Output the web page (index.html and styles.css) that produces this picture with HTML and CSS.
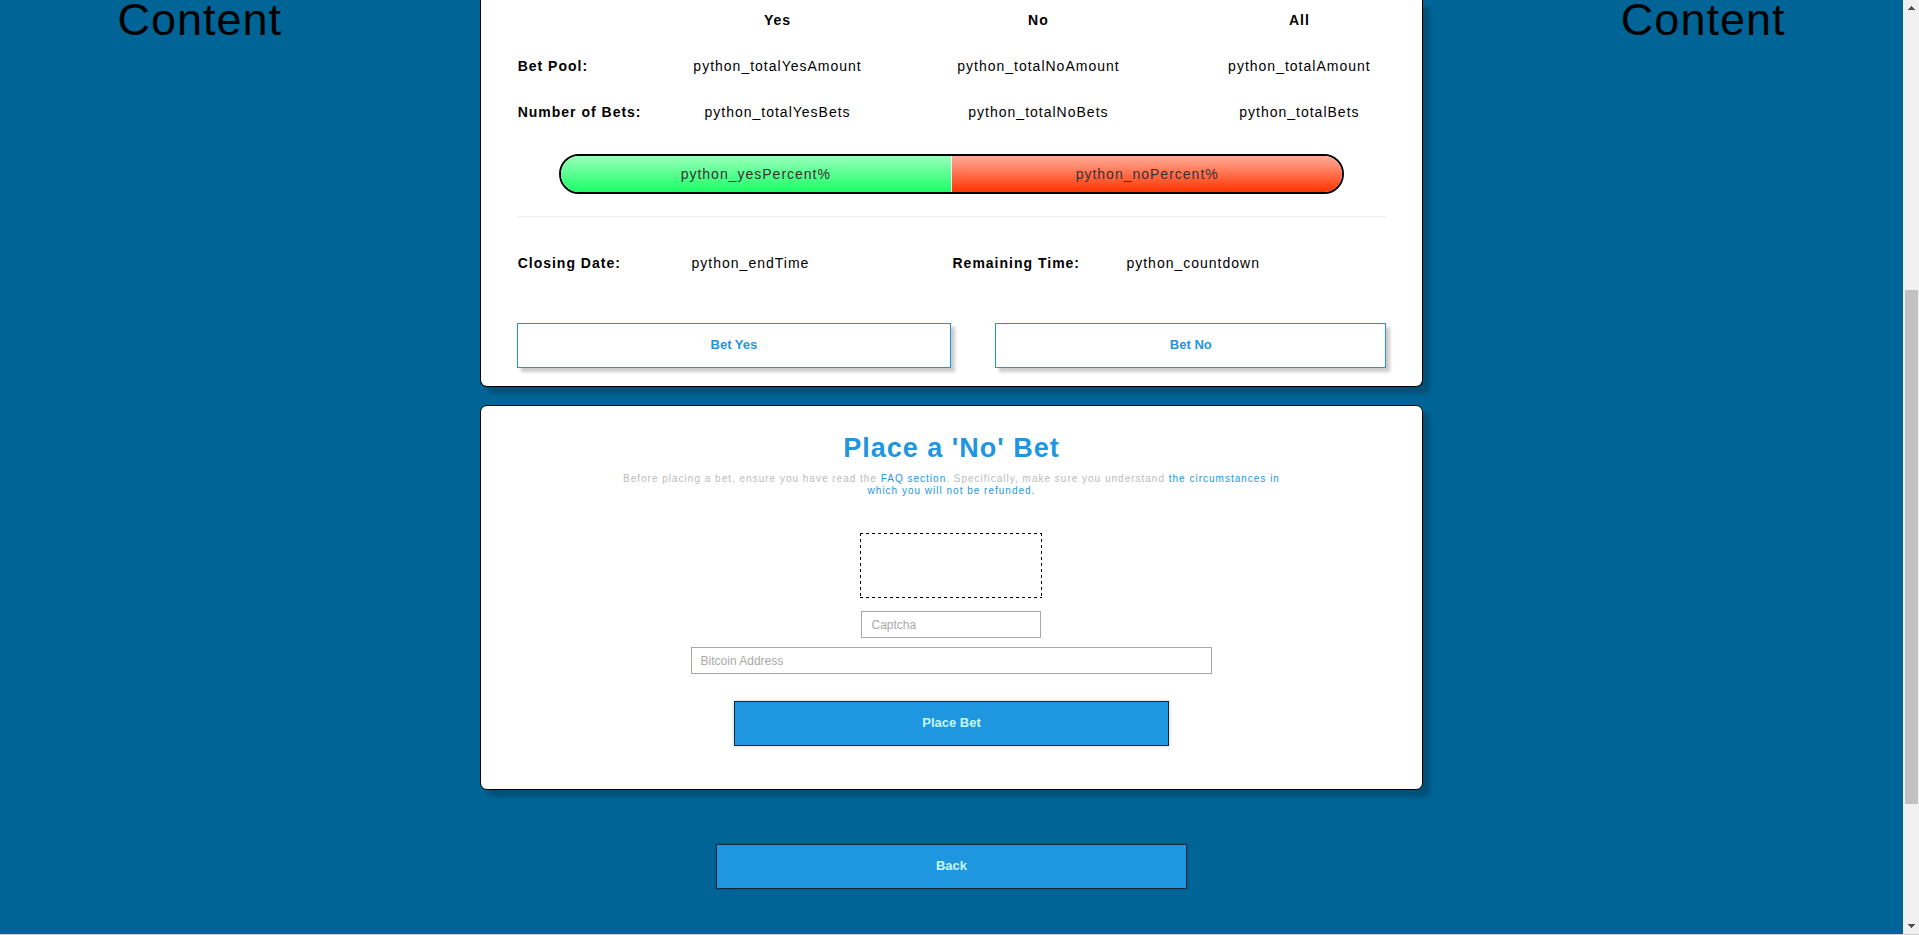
FILE: index.html
```html
<!DOCTYPE html>
<html lang="en">
<head>
<meta charset="utf-8">
<title>Place a Bet</title>
<link rel="stylesheet" href="styles.css">
</head>
<body>
<div class="window">
  <div class="page">
    <aside class="side">Content</aside>
    <main class="main">
      <section class="card card-stats">
        <table class="stats">
          <colgroup><col class="col-label"><col class="col-first"><col class="col-rest"><col class="col-rest"></colgroup>
          <thead>
            <tr><td></td><th scope="col">Yes</th><th scope="col">No</th><th scope="col">All</th></tr>
          </thead>
          <tbody>
            <tr><th scope="row">Bet Pool:</th><td>python_totalYesAmount</td><td>python_totalNoAmount</td><td>python_totalAmount</td></tr>
            <tr><th scope="row">Number of Bets:</th><td>python_totalYesBets</td><td>python_totalNoBets</td><td>python_totalBets</td></tr>
          </tbody>
        </table>
        <div class="ratio">
          <div class="ratio-part ratio-yes">python_yesPercent%</div>
          <div class="ratio-part ratio-no">python_noPercent%</div>
        </div>
        <hr class="rule">
        <dl class="times">
          <dt>Closing Date:</dt><dd>python_endTime</dd>
          <dt>Remaining Time:</dt><dd>python_countdown</dd>
        </dl>
        <div class="choices">
          <button type="button" class="button button-outline">Bet Yes</button>
          <button type="button" class="button button-outline">Bet No</button>
        </div>
      </section>
      <section class="card card-form">
        <h2 class="title">Place a 'No' Bet</h2>
        <p class="note">Before placing a bet, ensure you have read the <a href="#faq">FAQ section</a>. Specifically, make sure you understand <a href="#refunds">the circumstances in which you will not be refunded.</a></p>
        <form class="form">
          <div class="captcha-image"></div>
          <input class="field field-captcha" type="text" placeholder="Captcha" aria-label="Captcha">
          <input class="field field-address" type="text" placeholder="Bitcoin Address" aria-label="Bitcoin Address">
          <button type="button" class="button button-solid button-place">Place Bet</button>
        </form>
      </section>
      <button type="button" class="button button-solid button-back">Back</button>
    </main>
    <aside class="side">Content</aside>
  </div>
  <div class="scrollbar" aria-hidden="true">
    <svg class="arrow" width="7" height="4" viewBox="0 0 7 4"><path d="M3 0h1v1h1v1h1v1h1v1H0V3h1V2h1V1h1z" fill="#505050"/></svg>
    <div class="track"><div class="thumb"></div></div>
    <svg class="arrow" width="7" height="4" viewBox="0 0 7 4"><path d="M0 0h7v1H6v1H5v1H4v1H3V3H2V2H1V1H0z" fill="#505050"/></svg>
  </div>
</div>
</body>
</html>
```

FILE: styles.css
```css
* {
  box-sizing: border-box;
}

body {
  margin: 0;
  background: #006596;
  color: #000;
  font: 14px/16px "Liberation Sans", Arial, sans-serif;
  letter-spacing: 1px;
}

.window {
  display: flex;
  min-height: 100vh;
  border-bottom: 1px solid #ccc;
}

.page {
  flex: 1;
  display: grid;
  grid-template-columns: 21fr 58fr 21fr;
}

.side {
  font-size: 45px;
  line-height: 40px;
  text-align: center;
}

.main {
  display: flex;
  flex-direction: column;
  align-items: center;
  padding: 0 80px 45px;
}

.card {
  width: 100%;
  padding: 0 36px;
  border: 1px solid #000;
  border-radius: 7px;
  background: #fff;
  box-shadow: 7px 7px 4px rgba(0, 0, 0, 0.2);
}

.card-stats {
  margin-bottom: 18px;
  padding-bottom: 18px;
  border-top: 0;
  border-top-left-radius: 0;
  border-top-right-radius: 0;
}

.stats {
  width: 100%;
  table-layout: fixed;
  border-collapse: collapse;
  text-align: center;
}

.col-label,
.col-first {
  width: 20%;
}

.col-rest {
  width: 30%;
}

.stats th,
.stats td {
  padding: 15px 0;
}

.stats thead th {
  padding-top: 12px;
}

.stats th:nth-child(n + 3),
.stats td:nth-child(n + 3) {
  padding-left: 10%;
}

.stats tbody th {
  padding-left: 1px;
  text-align: left;
}

.ratio {
  display: flex;
  gap: 1px;
  margin: 19px 42px 22px;
  border: 2px solid #000;
  border-radius: 20px;
  overflow: hidden;
  line-height: 36px;
  text-align: center;
  color: #333;
}

.ratio-part {
  flex: 1;
}

.ratio-yes {
  background: linear-gradient(#99ffbb, #1aff66);
}

.ratio-no {
  background: linear-gradient(#ffad99, #ff3300);
}

.rule {
  height: 1px;
  margin: 0;
  border: 0;
  background: #eee;
}

.times {
  display: grid;
  grid-template-columns: 2fr 3fr 2fr 3fr;
  margin: 38px 0 52px;
}

.times dt,
.times dd {
  margin: 0;
  padding-left: 1px;
}

.times dt {
  font-weight: bold;
}

.choices {
  display: grid;
  grid-template-columns: 10fr 9fr;
  gap: 44px;
}

.button {
  height: 45px;
  padding: 0 12px 2px;
  border: 1px solid #1e96e0;
  font: bold 13px/16px "Liberation Sans", Arial, sans-serif;
}

.button-outline {
  background: #fff;
  color: #1e96e0;
  box-shadow: 4px 4px 3px rgba(0, 0, 0, 0.2);
}

.button-solid {
  width: 50%;
  border-color: #12293d;
  background: #1e96e0;
  color: #c5faff;
  box-shadow: 0 0 4px rgba(0, 0, 0, 0.2);
}

.card-form {
  padding-bottom: 43px;
  text-align: center;
}

.title {
  margin: 26px 0 9px;
  color: #1e96e0;
  font-size: 27px;
  line-height: 32px;
}

.note {
  max-width: 78%;
  margin: 0 auto 36px;
  color: #bbb;
  font-size: 10px;
  line-height: 12px;
}

.note a {
  color: #1e96e0;
  text-decoration: none;
}

.form {
  display: flex;
  flex-direction: column;
  align-items: center;
}

.captcha-image {
  --dash: #000 0 3px, transparent 3px 6px;
  width: 182px;
  height: 65px;
  margin-bottom: 13px;
  background:
    repeating-linear-gradient(90deg, var(--dash)) top / 100% 1px no-repeat,
    repeating-linear-gradient(90deg, var(--dash)) bottom / 100% 1px no-repeat,
    repeating-linear-gradient(var(--dash)) left / 1px 100% no-repeat,
    repeating-linear-gradient(var(--dash)) right / 1px 100% no-repeat;
}

.field {
  height: 27px;
  margin: 0 0 9px;
  padding: 0 9px;
  border: 1px solid #a9a9a9;
  font: 12px/16px "Liberation Sans", Arial, sans-serif;
}

.field::placeholder {
  color: #a9a9a9;
}

.field-captcha {
  width: 180px;
}

.field-address {
  width: 60%;
}

.button-place {
  margin-top: 18px;
}

.button-back {
  margin-top: 54px;
}

.scrollbar {
  display: flex;
  flex-direction: column;
  align-items: center;
  width: 16px;
  padding: 6px 0;
  background: #f0f0f0;
}

.track {
  flex: 1;
  width: 13px;
  padding-top: 280px;
}

.thumb {
  height: 81%;
  background: #c1c1c1;
}
```
